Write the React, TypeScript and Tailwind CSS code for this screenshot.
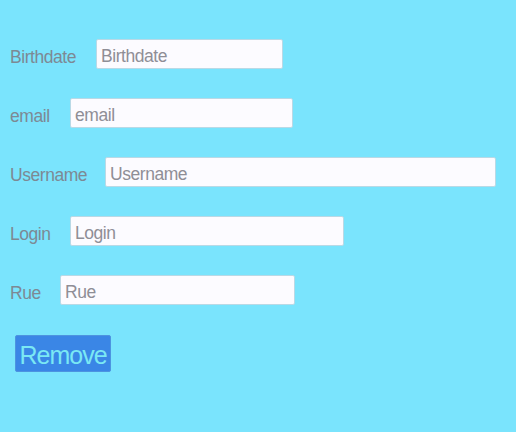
import React from "react";

const fields = [
  { label: "Birthdate", labelW: "w-[86px]", width: "w-[187px]" },
  { label: "email", labelW: "w-[60px]", width: "w-[223px]" },
  { label: "Username", labelW: "w-[95px]", width: "w-[391px]" },
  { label: "Login", labelW: "w-[60px]", width: "w-[274px]" },
  { label: "Rue", labelW: "w-[50px]", width: "w-[235px]" },
];

export default function App() {
  return (
    <div className="w-[516px] h-[432px] bg-[#7ae4fd] pt-[39px] pl-[10px] font-['Liberation_Sans',Arial,sans-serif]">
      <div className="flex flex-col gap-[29px]">
        {fields.map((f) => (
          <div key={f.label} className="flex items-center h-[30px]">
            <label className={`${f.labelW} shrink-0 text-[17.5px] tracking-[-0.45px] leading-[18px] pt-[5px] text-[#7d8994]`}>{f.label}</label>
            <input
              placeholder={f.label}
              className={`${f.width} h-[30px] bg-[#fcfbff] border border-[#b9d9e6] rounded-[2px] px-[4px] pt-[5px] text-[17.5px] tracking-[-0.45px] text-[#333] placeholder:text-[#8f8e96] outline-none`}
            />
          </div>
        ))}
      </div>
      <button className="mt-[30px] ml-[5px] h-[37px] w-[96px] pt-[3px] bg-[#3a86e6] border border-[#4d94e0] rounded-[2px] text-[25px] tracking-[-1px] leading-none text-[#7ae8f4]">
        Remove
      </button>
    </div>
  );
}
